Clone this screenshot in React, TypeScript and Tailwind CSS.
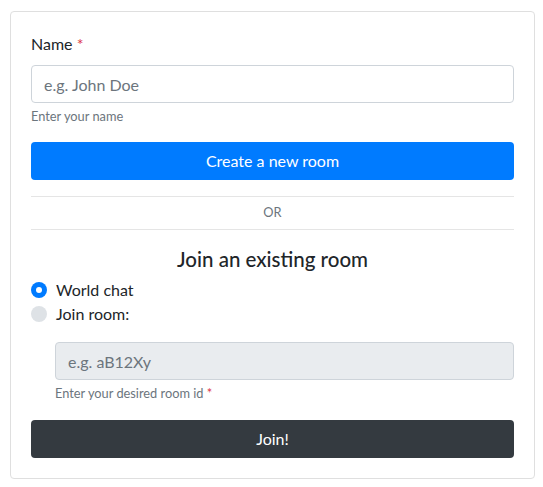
import React from "react";

export default function App() {
  return (
    <div
      className="min-h-[487px] bg-white pt-[11px] pl-[10px] text-[#212529]"
      style={{ fontFamily: '"Segoe UI", Lato, "Liberation Sans", sans-serif' }}
    >
      <div className="w-[525px] rounded-[4px] border border-[#dfdfdf] p-[20px]">
        <label className="block text-[16px] leading-[24px] mb-[9px]">
          Name <span className="text-[#dc3545]">*</span>
        </label>
        <input
          className="block w-full h-[38px] rounded-[4px] border border-[#ced4da] px-[12px] text-[16px] placeholder:text-[#6c757d] outline-none"
          placeholder="e.g. John Doe"
        />
        <div className="mt-[4px] text-[12.8px] leading-[19px] text-[#6c757d]">Enter your name</div>
        <button className="mt-[16px] block w-full h-[38px] rounded-[4px] bg-[#007bff] text-white text-[16px]">
          Create a new room
        </button>
        <div className="mt-[16px] border-t border-[#e5e5e5]" />
        <div className="h-[32px] flex items-center justify-center text-[12.8px] text-[#6c757d]">OR</div>
        <div className="border-t border-[#e5e5e5]" />
        <h5 className="mt-[17px] text-center text-[20.5px] leading-[24px] font-medium">Join an existing room</h5>
        <div className="mt-[7px]">
          <label className="flex items-center h-[24px] text-[16px]">
            <span className="w-[16px] h-[16px] rounded-full bg-[#007bff] flex items-center justify-center mr-[9px]">
              <span className="w-[6px] h-[6px] rounded-full bg-white" />
            </span>
            World chat
          </label>
          <label className="flex items-center h-[24px] text-[16px]">
            <span className="w-[16px] h-[16px] rounded-full bg-[#dee2e6] mr-[9px]" />
            Join room:
          </label>
        </div>
        <div className="ml-[24px] mt-[16px]">
          <input
            disabled
            className="block w-full h-[38px] rounded-[4px] border border-[#ced4da] bg-[#e9ecef] px-[12px] text-[16px] placeholder:text-[#6c757d] outline-none"
            placeholder="e.g. aB12Xy"
          />
          <div className="mt-[4px] text-[12.8px] leading-[19px] text-[#6c757d]">
            Enter your desired room id <span className="text-[#dc3545]">*</span>
          </div>
        </div>
        <button className="mt-[17px] block w-full h-[38px] rounded-[4px] bg-[#343a40] text-white text-[16px]">
          Join!
        </button>
      </div>
    </div>
  );
}
